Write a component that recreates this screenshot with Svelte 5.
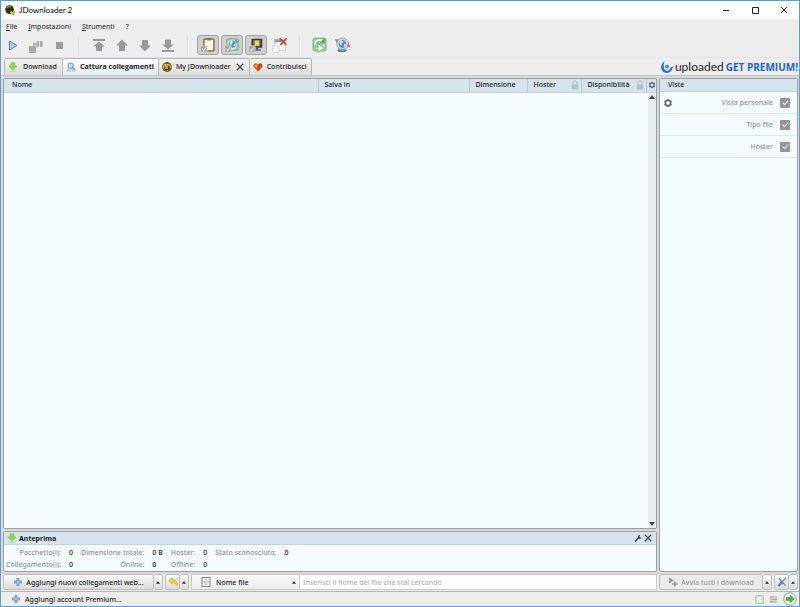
<script lang="ts">
  type Stat = { label: string; value: string };

  const menus = ["File", "Impostazioni", "Strumenti"];

  const columns = [
    { name: "Nome", cls: "name", lock: false },
    { name: "Salva in", cls: "save", lock: false },
    { name: "Dimensione", cls: "size", lock: false },
    { name: "Hoster", cls: "host", lock: true },
    { name: "Disponibilità", cls: "avail", lock: true },
  ];

  const tabs = [
    { id: "download", label: "Download", icon: "down" },
    { id: "grabber", label: "Cattura collegamenti", icon: "grab" },
    { id: "my", label: "My JDownloader", icon: "jd", closable: true },
    { id: "donate", label: "Contribuisci", icon: "heart" },
  ];

  const stats: Stat[][] = [
    [
      { label: "Pacchetto(i):", value: "0" },
      { label: "Dimensione totale:", value: "0 B" },
      { label: "Hoster:", value: "0" },
      { label: "Stato sconosciuto:", value: "0" },
    ],
    [
      { label: "Collegamento(i):", value: "0" },
      { label: "Online:", value: "0" },
      { label: "Offline:", value: "0" },
    ],
  ];

  let active = $state("grabber");
  let toggles = $state({ clip: true, reconnect: true, silent: true, limit: false });
  let views = $state([
    { name: "Vista personale", on: true, gear: true },
    { name: "Tipo file", on: true, gear: false },
    { name: "Hoster", on: true, gear: false },
  ]);
  let search = $state("");
</script>

{#snippet icon(name: string)}
  {#if name === "down"}
    <svg class="ic" viewBox="0 0 10 10" aria-hidden="true">
      <path d="M3 .8h4V4h2.2L5 8.4.8 4H3z" fill="#8fdc48" stroke="#6cc236" stroke-width=".6" />
      <path d="M1.4 9.3h7.2" stroke="#c3cbbf" stroke-width="1" />
    </svg>
  {:else if name === "grab"}
    <svg class="ic" viewBox="0 0 10 10" aria-hidden="true">
      <path d="M.6 9h8.8L8 7H2z" fill="#dfe9f2" stroke="#8fa9c4" stroke-width=".7" />
      <circle cx="4.6" cy="3.6" r="2.6" fill="#c3dcf4" stroke="#7fa2c8" stroke-width="1.1" />
      <path d="M6.4 5.4l2.4 2.2" stroke="#7896b5" stroke-width="1.3" />
    </svg>
  {:else if name === "jd"}
    <svg class="ic" viewBox="0 0 10 10" aria-hidden="true">
      <circle cx="5" cy="5" r="4.8" fill="#4b4514" />
      <path d="M1.4 6.6C1.6 3 2.6 2 3.6 2.4v4.4M5.2 7V2.6C7.6 2 9 3.6 8.2 6" fill="none" stroke="#d9b62a" stroke-width="1.4" />
      <path d="M2 7.8c2 1 4 1 6 0" stroke="#9a8a24" stroke-width=".8" fill="none" />
    </svg>
  {:else if name === "heart"}
    <svg class="ic" viewBox="0 0 10 10" aria-hidden="true">
      <path d="M5 9.4L.8 5C-.6 2.4 2.8-.2 5 2.4 7.2-.2 10.6 2.4 9.2 5z" fill="#d9401a" />
      <path d="M1.4 4.2C1.2 2.2 3.4 1.6 4.6 3.2L4 6.4z" fill="#f7a531" />
    </svg>
  {:else if name === "gear"}
    <svg class="ic" viewBox="0 0 10 10" aria-hidden="true">
      <circle cx="5" cy="5" r="2.6" fill="none" stroke="#56616a" stroke-width="1.4" />
      <path d="M5 1v1.4M5 7.6V9M1.5 3l1.2.7M7.3 6.3l1.2.7M1.5 7l1.2-.7M7.3 3.7L8.500 3" stroke="#56616a" stroke-width="1.7" />
    </svg>
  {:else if name === "close"}
    <svg class="ic" viewBox="0 0 10 10" aria-hidden="true">
      <path d="M1.8 1.8l6.4 6.4M8.2 1.8L1.8 8.2" stroke="#414b50" stroke-width="1.3" />
    </svg>
  {:else if name === "wrench"}
    <svg class="ic" viewBox="0 0 10 10" aria-hidden="true">
      <path d="M2.4 8L5.6 4.8" stroke="#38444b" stroke-width="1.6" stroke-linecap="round" />
      <path d="M7.2 2a2 2 0 1 0 1.4 2.500L7 4.6 6.4 3.6z" fill="#38444b" />
    </svg>
  {:else if name === "plus"}
    <svg class="ic" viewBox="0 0 10 10" aria-hidden="true">
      <path d="M4 1.4h2V4h2.600v2H6v2.600H4V6H1.4V4H4z" fill="#9fc3ea" stroke="#5d88bd" stroke-width=".8" />
    </svg>
  {:else if name === "lock"}
    <svg class="lock" viewBox="0 0 8 10" aria-hidden="true">
      <path d="M2 5V3a2 2 0 0 1 4 0v2" fill="none" stroke="#b2bdc4" stroke-width="1.1" />
      <rect x=".8" y="4.6" width="6.4" height="4.8" fill="#b5bfc6" />
    </svg>
  {:else if name === "up"}
    <svg class="tri" viewBox="0 0 6 4" aria-hidden="true"><path d="M3 0l3 4H0z" fill="currentColor" /></svg>
  {/if}
{/snippet}

{#snippet tick(on: boolean)}
  <rect x="2" y="11" width="7" height="7" fill={on ? "#9f9f9f" : "#f6f6f6"} stroke={on ? "#e2e2e2" : "#c4c4c4"} stroke-width=".7" />
  {#if on}<path d="M3.4 14.4l1.700 1.900L8 12.6" fill="none" stroke="#fff" stroke-width="1.3" />{/if}
{/snippet}

{#snippet cycle()}
  <rect x="4" y="3" width="13" height="13" rx="2" fill="#9ccaa6" stroke="#6ba87a" stroke-width=".8" />
  <path d="M6 9.5A4.5 4.5 0 0 1 13.5 6M15 9.5A4.5 4.5 0 0 1 7.5 13" fill="none" stroke="#e9f7ea" stroke-width="1.7" />
  <path d="M15.4 3.6v4.2h-4.2z" fill="#3d9b50" />
{/snippet}

{#snippet globe()}
  <circle cx="10.5" cy="9" r="4.4" fill="#5b8fcd" stroke="#dce6f0" stroke-width=".7" />
  <path d="M7.4 7c1.6-2 3.2-1.6 3.6-.4s-1.6 1-1.4 2.8-1.6.6-2.2-2.4zM12 9.4l2.2-1c.2 1.8-.8 3-2 3.4z" fill="#dfeeda" />
{/snippet}

<div class="window">
  <header class="titlebar">
    <svg class="logo" viewBox="0 0 12 12" aria-hidden="true">
      <circle cx="5" cy="5" r="4.7" fill="#253015" />
      <path d="M2 3.4c1.2-2 3.2-2 4.6-1" stroke="#7e9a51" stroke-width="1.2" fill="none" />
      <path d="M6 5.6l2.6 2.2L11 5.8v2.8l-2 2.6-3.2-2z" fill="#e3bd23" />
      <circle cx="9.4" cy="10.4" r="1.2" fill="#d8a51c" />
    </svg>
    <h1>JDownloader 2</h1>
    <div class="winbuttons">
      <button aria-label="Riduci"><svg viewBox="0 0 10 10"><path d="M2 5.5h6" /></svg></button>
      <button aria-label="Ingrandisci"><svg viewBox="0 0 10 10"><path d="M2.5 2.5h6v6h-6z" /></svg></button>
      <button aria-label="Chiudi"><svg viewBox="0 0 10 10"><path d="M2 2l6 6M8 2L2 8" /></svg></button>
    </div>
  </header>

  <nav class="menubar">
    {#each menus as m}
      <button><u>{m[0]}</u>{m.slice(1)}</button>
    {/each}
    <button>?</button>
  </nav>

  <div class="toolbar">
    <div class="group play">
      <button aria-label="Avvia">
        <svg viewBox="0 0 20 20"><path d="M6.5 6l7.5 4.500L6.500 15z" fill="#a9cdf0" stroke="#5486ba" stroke-width="1" /></svg>
      </button>
      <button aria-label="Pausa">
        <svg viewBox="0 0 20 20"><path d="M3 11h7v7H3zM7 8h3v2.500H7zM10.500 6h2.600v6h-2.600zM14 6h2.600v6H14z" fill="#aaa" /></svg>
      </button>
      <button aria-label="Ferma">
        <svg viewBox="0 0 20 20"><path d="M7 7h7v7H7z" fill="#9d9d9d" /></svg>
      </button>
    </div>
    <div class="group moves">
      <button aria-label="In cima">
        <svg viewBox="0 0 20 20"><path d="M4 4h12v2H4zM10 6.500l6 5h-3V16H7v-4.500H4z" fill="#999" /></svg>
      </button>
      <button aria-label="Su">
        <svg viewBox="0 0 20 20"><path d="M10 4.500l6 6h-3V16H7v-5.500H4z" fill="#999" /></svg>
      </button>
      <button aria-label="Giù">
        <svg viewBox="0 0 20 20"><path d="M10 16.500l6-6h-3V5H7v5.500H4z" fill="#999" /></svg>
      </button>
      <button aria-label="In fondo">
        <svg viewBox="0 0 20 20"><path d="M4 15h12v2H4zM10 14.500l6-5h-3V4.500H7v5H4z" fill="#999" /></svg>
      </button>
    </div>
    <div class="group toggles">
      <button aria-label="Appunti" aria-pressed={toggles.clip} onclick={() => (toggles.clip = !toggles.clip)}>
        <svg viewBox="0 0 20 20">
          <rect x="5" y="3" width="12" height="14" rx="1" fill="#b58a4d" stroke="#6d5026" stroke-width=".6" />
          <rect x="6.5" y="4.5" width="9" height="11" fill="#fbfbf6" />
          <rect x="8.5" y="2" width="5" height="3" rx="1" fill="#7d786c" />
          {@render tick(toggles.clip)}
        </svg>
      </button>
      <button aria-label="Riconnessione" aria-pressed={toggles.reconnect} onclick={() => (toggles.reconnect = !toggles.reconnect)}>
        <svg viewBox="0 0 20 20">{@render cycle()}{@render globe()}{@render tick(toggles.reconnect)}</svg>
      </button>
      <button aria-label="Modalità silenziosa" aria-pressed={toggles.silent} onclick={() => (toggles.silent = !toggles.silent)}>
        <svg viewBox="0 0 20 20">
          <rect x="5" y="3" width="12" height="10" rx="1" fill="#30363d" />
          <rect x="6.5" y="4.5" width="9" height="7" fill="#5e6780" />
          <rect x="8.5" y="5" width="5" height="6" fill="#f1d63c" />
          <path d="M9.5 13h3v2h3v1.5h-9V15h3z" fill="#59606a" />
          {@render tick(toggles.silent)}
        </svg>
      </button>
      <button aria-label="Limite" aria-pressed={toggles.limit} onclick={() => (toggles.limit = !toggles.limit)}>
        <svg viewBox="0 0 20 20">
          <rect x="4" y="4" width="12" height="12" fill="#fbfbfb" stroke="#bbb" stroke-width=".7" />
          <rect x="4" y="4" width="12" height="3" fill="#7c9bcc" />
          <path d="M9.5 2.5l7.5 7M17.500 2.500l-7 7.500" stroke="#e0432c" stroke-width="2" />
          {@render tick(toggles.limit)}
        </svg>
      </button>
    </div>
    <div class="group">
      <button aria-label="Aggiorna">
        <svg viewBox="0 0 20 20">{@render cycle()}<path d="M9 8.5l7 4.5-7 4.5z" fill="#fff" stroke="#5d9a6c" stroke-width=".7" /></svg>
      </button>
      <button aria-label="Cerca aggiornamenti">
        <svg viewBox="0 0 20 20">
          <path d="M5 15.500l2-2h6l2 2-2 1.500H7z" fill="#72777e" />
          <circle cx="10.5" cy="9" r="5.8" fill="none" stroke="#a9b1ba" stroke-width="1.2" />
          {@render globe()}
          <path d="M3 4l4 .5L4.5 8z" fill="#8a93a0" />
          <path d="M16.500 7.500l2 5-3.500-1z" fill="#d65f55" />
        </svg>
      </button>
    </div>
  </div>

  <div class="tabrow">
    <div class="tabs" role="tablist">
      {#each tabs as t}
        <button class="tab" role="tab" aria-selected={active === t.id} onclick={() => (active = t.id)}>
          {@render icon(t.icon)}
          <span>{t.label}</span>
          {#if t.closable}{@render icon("close")}{/if}
        </button>
      {/each}
    </div>
    <a class="banner" href="#premium">
      <svg viewBox="0 0 14 14" aria-hidden="true">
        <path d="M4.5 1C1 4 0 8 2.5 11c3 3.400 8 2 9.5-1.5.6-1.500 1-2.500 2-3-2 0-3.200.7-4 2.300-1 2.200-3.600 2.700-5 1C3.400 7.800 3.300 4.400 4.5 1z" fill="#2873cf" />
        <circle cx="7" cy="6.5" r="2" fill="#2e9be6" />
      </svg>
      <span class="brand">uploaded</span>
      <span class="offer">GET PREMIUM!</span>
    </a>
  </div>

  <main>
    <div class="left">
      <section class="panel list">
        <table>
          <thead>
            <tr>
              {#each columns as c}
                <th class={c.cls}>
                  <div class="cell"><span>{c.name}</span>{#if c.lock}{@render icon("lock")}{/if}</div>
                </th>
              {/each}
              <th class="cfg"><button aria-label="Colonne">{@render icon("gear")}</button></th>
            </tr>
          </thead>
        </table>
        <div class="rows">
          <div class="scroll">
            {@render icon("up")}
            <span class="flip">{@render icon("up")}</span>
          </div>
        </div>
      </section>

      <section class="panel preview">
        <div class="head">
          {@render icon("down")}
          <h2>Anteprima</h2>
          <button aria-label="Impostazioni anteprima">{@render icon("wrench")}</button>
          <button aria-label="Chiudi anteprima">{@render icon("close")}</button>
        </div>
        <div class="stats">
          {#each stats as row}
            {#each row as s}
              <span class="key">{s.label}</span><span>{s.value}</span>
            {/each}
          {/each}
        </div>
      </section>
    </div>

    <aside class="panel views">
      <h2 class="head">Viste</h2>
      {#each views as v, i}
        <div class="view">
          {#if v.gear}<button aria-label="Modifica viste">{@render icon("gear")}</button>{/if}
          <label for="view{i}">{v.name}</label>
          <input id="view{i}" type="checkbox" bind:checked={v.on} />
        </div>
      {/each}
    </aside>
  </main>

  <div class="bottombar">
    <div class="actions">
      <button class="btn add">{@render icon("plus")}<span>Aggiungi nuovi collegamenti web...</span></button>
      <button class="btn arrow" aria-label="Altre opzioni">{@render icon("up")}</button>
      <button class="btn undo" aria-label="Ripristina">
        <svg class="ic" viewBox="0 0 10 10">
          <path d="M.6 3.6L4.2.6v1.8c3.6 0 5.4 2 5 6.4C8 6.6 6.6 5.6 4.2 5.6v1.6z" fill="#f3d036" stroke="#c69d1f" stroke-width=".6" />
        </svg>
      </button>
      <button class="btn arrow" aria-label="Opzioni di ripristino">{@render icon("up")}</button>
      <div class="search">
        <div class="field">
          <svg class="ic" viewBox="0 0 10 10" aria-hidden="true">
            <rect x="1" y=".5" width="8" height="9" fill="#f4f4f4" stroke="#777" stroke-width=".9" />
            <path d="M1 5h8M4 2.700h2M4 7.200h2" stroke="#999" stroke-width=".8" />
          </svg>
          <select aria-label="Cerca per">
            <option>Nome file</option>
            <option>Hoster</option>
          </select>
          {@render icon("up")}
        </div>
        <input type="text" aria-label="Cerca" placeholder="Inserisci il nome del file che stai cercando" bind:value={search} />
      </div>
    </div>
    <div class="start">
      <button class="btn go" disabled>
        <svg class="ic" viewBox="0 0 10 10" aria-hidden="true"><path d="M1 .6l5 3-5 3zM6 4.500h1.600V6.200H9.500v1.600H7.600v1.700H6V7.800H4.200V6.200H6z" fill="#979797" /></svg>
        <span>Avvia tutti i download</span>
      </button>
      <button class="btn arrow" aria-label="Opzioni di avvio">{@render icon("up")}</button>
      <button class="btn tools" aria-label="Strumenti rapidi">
        <svg class="ic" viewBox="0 0 10 10"><path d="M1.500 9l4-4.500" stroke="#4779b4" stroke-width="2.2" /><path d="M5.500 4.500L9 .8M2 1.500l6.500 7" stroke="#7d8791" stroke-width="1.4" /></svg>
      </button>
      <button class="btn arrow" aria-label="Altri strumenti">{@render icon("up")}</button>
    </div>
  </div>

  <footer>
    <button class="account">{@render icon("plus")}<span>Aggiungi account Premium...</span></button>
    <div class="tray">
      <svg class="ic" viewBox="0 0 10 10" aria-hidden="true"><rect x=".5" y=".5" width="9" height="9" rx="1" fill="#c6e2cc" stroke="#a4c8ac" /><path d="M3 6.500a2.500 2.500 0 0 1 4-3M5 5l3 2-3 2z" stroke="#fff" fill="#fff" stroke-width=".8" /></svg>
      <svg class="ic" viewBox="0 0 10 10" aria-hidden="true"><path d="M1 1h8v8H1z" fill="#d5d5d5" /><path d="M1 2.500h8M1 5h8M1 7.500h8" stroke="#b5b5b5" /><path d="M1 2.500h3M5 5h4M1 7.500h3" stroke="#cf8c8c" /></svg>
      <svg class="next" viewBox="0 0 14 14" aria-hidden="true"><circle cx="7" cy="7" r="6.2" fill="#fbfbfb" stroke="#86918a" stroke-width=".9" /><path d="M3 5.500h4V3l4.500 4L7 11V8.500H3z" fill="#4fb52c" stroke="#3b8d20" stroke-width=".5" /></svg>
    </div>
  </footer>
</div>

<style>
  :global(body) {
    margin: 0;
  }
  .window {
    box-sizing: border-box;
    min-height: 100vh;
    display: flex;
    flex-direction: column;
    border: 1px solid #5f9fce;
    background: #eeeeee;
    color: #222;
    font: 500 7px/10px "Noto Sans", "Open Sans", sans-serif;
  }
  button,
  input,
  select {
    font: inherit;
    color: inherit;
    border: 0;
    margin: 0;
    padding: 0;
    background: none;
  }
  button {
    display: flex;
    align-items: center;
    white-space: nowrap;
  }
  h1,
  h2 {
    margin: 0;
    font: inherit;
  }
  svg {
    display: block;
    flex: none;
  }
  .ic {
    width: 10px;
    height: 10px;
  }
  .tri {
    width: 4px;
    height: 3px;
  }

  .titlebar {
    display: flex;
    align-items: center;
    height: 18px;
    padding-left: 4px;
    background: #fff;
  }
  .logo {
    width: 11px;
    height: 11px;
    margin-right: 3px;
  }
  h1 {
    flex: 1;
    font: 8px/10px Lato, sans-serif;
    color: #000;
  }
  .winbuttons {
    display: flex;
    padding-right: 1px;
  }
  .winbuttons button {
    width: 29px;
    height: 18px;
    justify-content: center;
  }
  .winbuttons svg {
    width: 10px;
    height: 10px;
    fill: none;
    stroke: #222;
    stroke-width: 1;
  }

  .menubar {
    display: flex;
    gap: 11px;
    height: 16px;
    padding-left: 5px;
    font-weight: 400;
  }

  .toolbar {
    display: flex;
    height: 20px;
    padding: 0 2px 2px;
  }
  .group {
    display: flex;
    align-items: center;
    gap: 3px;
  }
  .group + .group {
    border-left: 1px solid #e2e2e2;
    padding-left: 9px;
  }
  .group svg {
    width: 20px;
    height: 20px;
  }
  .play {
    padding-right: 9px;
  }
  .moves,
  .toggles {
    padding-right: 8px;
  }
  .moves button,
  .toggles button {
    border: 1px solid transparent;
    border-radius: 3px;
  }
  .moves {
    gap: 1px;
  }
  .toggles {
    gap: 2px;
  }
  .toggles button {
    height: 20px;
    box-sizing: border-box;
  }
  .toggles button[aria-pressed="true"] {
    border-color: #a2a2a2;
    background: #d0d0d0;
  }
  .toggles svg {
    height: 18px;
  }

  .tabrow {
    display: flex;
    align-items: flex-end;
    justify-content: space-between;
    height: 17px;
    border-top: 1px solid #e3e3e3;
  }
  .tabs {
    display: flex;
    padding-left: 3px;
  }
  .tab {
    box-sizing: border-box;
    height: 17px;
    gap: 4px;
    padding: 0 4px 1px 3px;
    border: 1px solid #b6b6b6;
    border-left-width: 0;
    border-bottom: 0;
    border-radius: 2px 2px 0 0;
    background: linear-gradient(#f2f2f2, #dedede);
  }
  .tab:first-child {
    border-left-width: 1px;
  }
  .tab[aria-selected="true"] {
    font-family: "Open Sans", sans-serif;
    font-weight: 700;
    background: linear-gradient(#fff, #dfeff6);
  }
  .tab .ic + span {
    min-width: 36px;
  }
  .banner {
    display: flex;
    align-items: center;
    height: 17px;
    padding-right: 1px;
    text-decoration: none;
    white-space: nowrap;
  }
  .banner svg {
    width: 14px;
    height: 14px;
  }
  .brand {
    margin: 0 2px 0 1px;
    font: 12px/16px Lato, sans-serif;
    color: #222;
  }
  .offer {
    font: bold 10px/16px "Open Sans", sans-serif;
    color: #2363c9;
  }

  main {
    flex: 1;
    display: flex;
    gap: 2px;
    padding: 2px 1px 2px 2px;
    border-top: 1px solid #c4c4c8;
    background: #d8d8dc;
  }
  .left {
    flex: 1;
    display: flex;
    flex-direction: column;
    gap: 2px;
    min-width: 0;
  }
  .panel {
    display: flex;
    flex-direction: column;
    border: 1px solid #9aa2a7;
    border-radius: 2px;
    background: #f4fcff;
  }
  .list {
    flex: 1;
  }
  table {
    width: 100%;
    table-layout: fixed;
    border-collapse: collapse;
    background: #d6e5ed;
  }
  th {
    box-sizing: border-box;
    height: 13px;
    padding: 0 2px 0 6px;
    border-bottom: 1px solid #c5d3da;
    border-right: 1px solid #bac8cf;
    text-align: left;
    font-weight: 500;
  }
  .cell {
    display: flex;
    align-items: center;
    justify-content: space-between;
    white-space: nowrap;
  }
  .name {
    padding-left: 8px;
  }
  .save {
    width: 151px;
  }
  .size {
    width: 58px;
  }
  .host {
    width: 54px;
  }
  .avail {
    width: 65px;
  }
  .cfg {
    width: 10px;
    padding: 0 1px;
    border-right: 0;
  }
  .cfg .ic {
    width: 8px;
    height: 8px;
  }
  .lock {
    width: 8px;
    height: 10px;
  }
  .rows {
    flex: 1;
    display: flex;
    justify-content: flex-end;
  }
  .scroll {
    display: flex;
    flex-direction: column;
    align-items: center;
    justify-content: space-between;
    width: 8px;
    padding: 2px 0;
    background: #e6eef2;
    color: #3f4a50;
  }
  .scroll .tri {
    width: 6px;
    height: 4px;
  }
  .flip {
    transform: rotate(180deg);
  }

  .head {
    display: flex;
    align-items: center;
    height: 12px;
    padding: 0 3px;
    background: #d6e5ed;
    border-bottom: 1px solid #c5d3da;
  }
  .preview h2 {
    flex: 1;
    padding: 1px 0 0 2px;
    font-weight: bold;
  }
  .stats {
    display: grid;
    grid-template-columns: repeat(8, auto);
    justify-content: start;
    gap: 2px 8px;
    padding: 3px 3px 1px 2px;
  }
  .key {
    color: #8d9499;
    text-align: right;
  }

  .views {
    width: 137px;
  }
  .views .head {
    padding-left: 8px;
  }
  .view {
    display: flex;
    align-items: center;
    gap: 7px;
    height: 21px;
    padding: 0 7px 0 3px;
    border-bottom: 1px solid #dce8ed;
    color: #8f9599;
  }
  .view label {
    flex: 1;
    text-align: right;
  }
  .view input {
    appearance: none;
    display: flex;
    align-items: center;
    justify-content: center;
    width: 10px;
    height: 10px;
    border-radius: 1px;
    background: #dcdcdc;
  }
  .view input:checked {
    background: #949494;
  }
  .view input:checked::after {
    content: "";
    width: 2px;
    height: 5px;
    margin-bottom: 1px;
    border: solid #fff;
    border-width: 0 1px 1px 0;
    transform: rotate(45deg);
  }

  .bottombar {
    display: flex;
    gap: 2px;
    height: 16px;
    padding: 0 1px 1px 2px;
    border-bottom: 1px solid #b5b5b5;
  }
  .actions {
    flex: 1;
    display: flex;
  }
  .btn {
    box-sizing: border-box;
    height: 16px;
    justify-content: center;
    border: 1px solid #bcbcbc;
    border-radius: 2px;
    background: linear-gradient(#fafafa, #dcdcdc);
  }
  .btn span,
  .account span {
    padding-top: 1px;
  }
  .add {
    gap: 3px;
    width: 151px;
  }
  .arrow {
    width: 9px;
    border-left: 0;
  }
  .undo {
    width: 15px;
    margin-left: 2px;
  }
  .search {
    flex: 1;
    display: flex;
    margin-left: 2px;
    border: 1px solid #c8c8c8;
    background: #fdfdfd;
  }
  .field {
    display: flex;
    align-items: center;
    box-sizing: border-box;
    width: 108px;
    padding: 0 3px 0 9px;
    border-right: 1px solid #c8c8c8;
    background: linear-gradient(#fafafa, #ececec);
  }
  .field select {
    flex: 1;
    appearance: none;
    padding: 1px 0 0 5px;
  }
  .search input {
    flex: 1;
    padding: 1px 3px 0;
  }
  .search input::placeholder {
    color: #b4b4b4;
    opacity: 1;
  }
  .start {
    display: flex;
    width: 139px;
  }
  .go {
    flex: 1;
    gap: 3px;
    color: #989898;
    background: #ebebeb;
  }
  .tools {
    width: 15px;
    margin-left: 2px;
  }

  footer {
    display: flex;
    align-items: center;
    justify-content: space-between;
    height: 14px;
    padding: 0 2px 0 10px;
  }
  .account {
    gap: 4px;
  }
  .tray {
    display: flex;
    align-items: center;
    gap: 5px;
  }
  .tray .ic {
    width: 9px;
    height: 9px;
  }
  .next {
    width: 14px;
    height: 14px;
  }
</style>
